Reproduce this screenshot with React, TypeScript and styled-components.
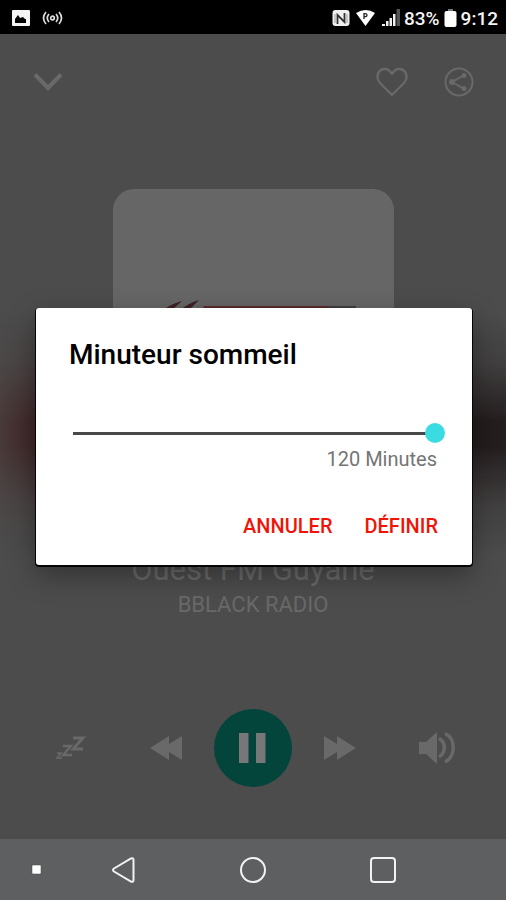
import React, { useState } from "react";
import styled, { createGlobalStyle } from "styled-components";

const GlobalStyle = createGlobalStyle`
  *, *::before, *::after { box-sizing: border-box; }
  html, body, #root { height: 100%; }
  body {
    margin: 0;
    background: #4c4c4c;
    font-family: Roboto, "Liberation Sans", sans-serif;
  }
  svg { display: block; }
`;

const Screen = styled.div`
  min-height: 100%;
  display: flex;
  flex-direction: column;
`;

const StatusBar = styled.header`
  height: 34px;
  padding: 2px 8px 0 12px;
  display: flex;
  align-items: center;
  justify-content: space-between;
  background: #000;
  color: #f4f4f4;
  font-size: 19px;
  font-weight: 500;
`;

const StatusGroup = styled.div<{ $gap: number }>`
  display: flex;
  align-items: center;
  gap: ${(p) => p.$gap}px;
`;

const Player = styled.main`
  position: relative;
  flex: 1;
  display: flex;
  flex-direction: column;
  align-items: center;
  background: #4c4c4c;
  color: #696969;
`;

const Glow = styled.div`
  position: absolute;
  inset: 280px 0 auto;
  height: 240px;
  background: linear-gradient(90deg, #483a38, #402628 36px, #241c1d 470px, #241e1f);
  mask-image: linear-gradient(transparent, rgba(0, 0, 0, 0.25) 20%, #000 45%, #000 55%, rgba(0, 0, 0, 0.25) 80%, transparent);
`;

const TopBar = styled.div`
  width: 100%;
  padding: 33px 32px 0 33px;
  display: flex;
  align-items: center;
  justify-content: space-between;
`;

const Actions = styled.div`
  display: flex;
  align-items: center;
  gap: 36px;
`;

const IconButton = styled.button`
  display: flex;
  align-items: center;
  justify-content: center;
  padding: 0;
  border: 0;
  background: none;
  color: inherit;
`;

const Artwork = styled.div`
  position: relative;
  margin-top: 92px;
  width: 281px;
  height: 281px;
  overflow: hidden;
  border-radius: 21px;
  background: #666;
`;

const Station = styled.h1`
  position: relative;
  margin: 82px 0 0;
  font-size: 31px;
  line-height: 36px;
  font-weight: 400;
`;

const Genre = styled.p`
  margin: 4px 0 0;
  font-size: 22px;
  line-height: 26px;
`;

const Controls = styled.div`
  width: 100%;
  margin-top: auto;
  padding: 0 50px 52px 56px;
  display: flex;
  align-items: center;
  justify-content: space-between;
`;

const Transport = styled.div`
  display: flex;
  align-items: center;
  gap: 32px;
`;

const PlayButton = styled(IconButton)`
  width: 78px;
  height: 78px;
  border-radius: 50%;
  background: #03443b;
  color: #77777a;
`;

const Backdrop = styled.div`
  position: absolute;
  inset: 0;
  padding: 0 34px 0 36px;
  display: flex;
  align-items: center;
`;

const Dialog = styled.section`
  flex: 1;
  padding: 31px 27px 19px 33px;
  border-radius: 3px;
  background: #fff;
  color: #000;
  box-shadow: 0 1px 0 1px #050505, 0 10px 28px rgba(0, 0, 0, 0.35);
`;

const DialogTitle = styled.h2`
  margin: 0;
  font-size: 28px;
  line-height: 32px;
  font-weight: 500;
`;

const Slider = styled.input`
  display: block;
  width: 100%;
  height: 20px;
  margin: 52px 0 0;
  appearance: none;
  background: linear-gradient(#484848, #484848) 4px center / calc(100% - 12px) 3px no-repeat;

  &::-webkit-slider-thumb {
    appearance: none;
    width: 20px;
    height: 20px;
    border-radius: 50%;
    background: #3bdbe2;
  }
`;

const Duration = styled.label`
  display: block;
  margin: 4px 8px 0 0;
  text-align: right;
  font-size: 20px;
  line-height: 24px;
  color: #757575;
`;

const DialogActions = styled.div`
  margin: 35px 7px 0 0;
  display: flex;
  justify-content: flex-end;
  gap: 32px;
`;

const TextButton = styled.button`
  padding: 8px 0;
  border: 0;
  background: none;
  font: 500 20px/24px Roboto, sans-serif;
  text-transform: uppercase;
  color: #f01408;
`;

const NavBar = styled.nav`
  height: 61px;
  padding: 0 109px 0 31px;
  display: flex;
  align-items: center;
  justify-content: space-between;
  background: #5e5f60;
  color: #f2f2f2;
`;

const NavLeft = styled.div`
  display: flex;
  align-items: center;
  gap: 70px;
`;

export default function App() {
  const [minutes, setMinutes] = useState(120);
  return (
    <Screen>
      <GlobalStyle />
      <StatusBar>
        <StatusGroup $gap={12}>
          <svg width="18" height="17" viewBox="0 0 18 17">
            <rect width="18" height="16" rx="1" fill="#f4f4f4" />
            <path d="M3 13V9l3-4 2 3 3-1 2 2 1 0v4z" fill="#000" />
          </svg>
          <svg width="21" height="16" viewBox="0 0 21 16" fill="none" stroke="#ddd" strokeWidth="1.7">
            <path d="M4 2Q-1 8 4 14M7 4Q3.500 8 7 12M17 2Q22 8 17 14M14 4Q17.500 8 14 12" />
            <circle cx="10.500" cy="8" r="1.800" />
          </svg>
        </StatusGroup>
        <StatusGroup $gap={4}>
          <svg width="18" height="17" viewBox="0 0 18 17">
            <rect x="0.500" width="17" height="16" rx="3" fill="#f0f0f0" />
            <path d="M5.500 14V5l7 7V3" fill="none" stroke="#333" strokeWidth="1.800" />
            <path d="M3 4v9M15 4v9" fill="none" stroke="#999" />
          </svg>
          <svg width="24" height="18" viewBox="2 0 24 18">
            <path d="M4 4Q14-2 23 4L13.500 17z" fill="#fff" />
            <path d="M12 4v6M12 5q3-1 3 1t-3 1.500" fill="none" stroke="#222" strokeWidth="1.300" />
          </svg>
          <svg width="18" height="18" viewBox="0 0 18 18">
            <path d="M0 17v-2h3v2zM4 17v-5h2.500v5zM7.500 17V9H10v8zM11 17V5h2.500v12z" fill="#f0f0f0" />
            <path d="M14.500 17V0H18v17z" fill="#555" />
          </svg>
          <span>83%</span>
          <svg width="13" height="18" viewBox="0 0 13 18">
            <path d="M4 0h5v2H4z" fill="#777" />
            <rect x="0.500" y="2" width="12" height="16" rx="2" fill="#fff" />
          </svg>
          <span>9:12</span>
        </StatusGroup>
      </StatusBar>

      <Player>
        <Glow />
        <TopBar>
          <IconButton aria-label="Réduire">
            <svg width="30" height="18" viewBox="0 0 30 18" fill="none" stroke="currentColor" strokeWidth="4">
              <path d="M2 1.500L15 15 28 1.500" />
            </svg>
          </IconButton>
          <Actions>
            <IconButton aria-label="Favori">
              <svg width="32" height="30" viewBox="0 0 32 30" fill="none" stroke="currentColor" strokeWidth="2.300">
                <path d="M16 28L4 16C-1 10 2 2 9 2c3 0 5 1.500 7 5 2-3.500 4-5 7-5 7 0 10 8 5 14z" strokeLinejoin="round" />
              </svg>
            </IconButton>
            <IconButton aria-label="Partager">
              <svg width="30" height="30" viewBox="0 0 30 30" fill="none" stroke="currentColor" strokeWidth="2">
                <circle cx="15" cy="15" r="13.500" />
                <path d="M19.500 8.500L8 15l11.500 6.500" />
                <g fill="currentColor" stroke="none">
                  <circle cx="20" cy="8.500" r="2.500" />
                  <circle cx="8" cy="15" r="3" />
                  <circle cx="20" cy="21.500" r="2.500" />
                </g>
              </svg>
            </IconButton>
          </Actions>
        </TopBar>
        <Artwork>
          <svg width="281" height="281" viewBox="0 0 281 281">
            <path d="M50 121q8-6 19-9l-10 9zM67 121q9-7 19-10l-10 10z" fill="#3f2024" />
            <path d="M91 117h151v12H84z" fill="#5a2c2a" />
            <path d="M216 117h27v12h-27z" fill="#3f3f42" />
          </svg>
        </Artwork>
        <Station>Ouest FM Guyane</Station>
        <Genre>BBLACK RADIO</Genre>
        <Controls>
          <IconButton aria-label="Minuteur sommeil">
            <svg width="30" height="26" viewBox="0 0 30 26" fill="none" stroke="currentColor">
              <path d="M17 3h10L17 14h10" strokeWidth="2.800" />
              <path d="M7 11h8L7 20h9" strokeWidth="2.300" />
              <path d="M1 18h4l-4 5h5" strokeWidth="1.600" />
            </svg>
          </IconButton>
          <Transport>
            <IconButton aria-label="Précédent">
              <svg width="32" height="24" viewBox="0 0 32 24" fill="currentColor">
                <path d="M0 12L19 0v8L32 0v24l-13-8v8z" />
              </svg>
            </IconButton>
            <PlayButton aria-label="Pause">
              <svg width="27" height="30" viewBox="0 0 27 30" fill="currentColor">
                <path d="M0 0h9.500v30H0zM17 0h9.500v30H17z" />
              </svg>
            </PlayButton>
            <IconButton aria-label="Suivant">
              <svg width="32" height="24" viewBox="0 0 32 24" fill="currentColor">
                <path d="M32 12L13 0v8L0 0v24l13-8v8z" />
              </svg>
            </IconButton>
          </Transport>
          <IconButton aria-label="Volume">
            <svg width="37" height="34" viewBox="0 0 37 34" fill="none" stroke="currentColor" strokeWidth="3.500">
              <path d="M0 11h7L18 1v32L7 23H0z" fill="currentColor" stroke="none" />
              <path d="M20 7.500C27 11 27 22 20 26M26 2.500C37 7 37 26 26 31" />
            </svg>
          </IconButton>
        </Controls>

        <Backdrop>
          <Dialog role="dialog" aria-labelledby="timer-title">
            <DialogTitle id="timer-title">Minuteur sommeil</DialogTitle>
            <Slider
              id="timer"
              type="range"
              min={0}
              max={120}
              value={minutes}
              onChange={(e) => setMinutes(Number(e.target.value))}
            />
            <Duration htmlFor="timer">{minutes} Minutes</Duration>
            <DialogActions>
              <TextButton type="button">Annuler</TextButton>
              <TextButton type="button">Définir</TextButton>
            </DialogActions>
          </Dialog>
        </Backdrop>
      </Player>

      <NavBar>
        <NavLeft>
          <IconButton aria-label="Menu">
            <svg width="11" height="11" viewBox="0 0 11 11">
              <rect x="1" y="1" width="9" height="9" rx="1" fill="#fff" stroke="#444" strokeWidth="0.500" />
            </svg>
          </IconButton>
          <IconButton aria-label="Retour">
            <svg width="24" height="28" viewBox="0 0 24 28" fill="none" stroke="currentColor" strokeWidth="2">
              <path d="M2 12.500L19 2.500q2.500-1 2.500 1.500v20q0 2.500-2.500 1.500L2 15.500q-2-1.500 0-3z" />
            </svg>
          </IconButton>
        </NavLeft>
        <IconButton aria-label="Accueil">
          <svg width="28" height="28" viewBox="0 0 28 28" fill="none" stroke="currentColor" strokeWidth="2">
            <circle cx="14" cy="14" r="12" />
          </svg>
        </IconButton>
        <IconButton aria-label="Applications récentes">
          <svg width="28" height="28" viewBox="0 0 28 28" fill="none" stroke="currentColor" strokeWidth="2">
            <rect x="2" y="2" width="24" height="24" rx="3" />
          </svg>
        </IconButton>
      </NavBar>
    </Screen>
  );
}
